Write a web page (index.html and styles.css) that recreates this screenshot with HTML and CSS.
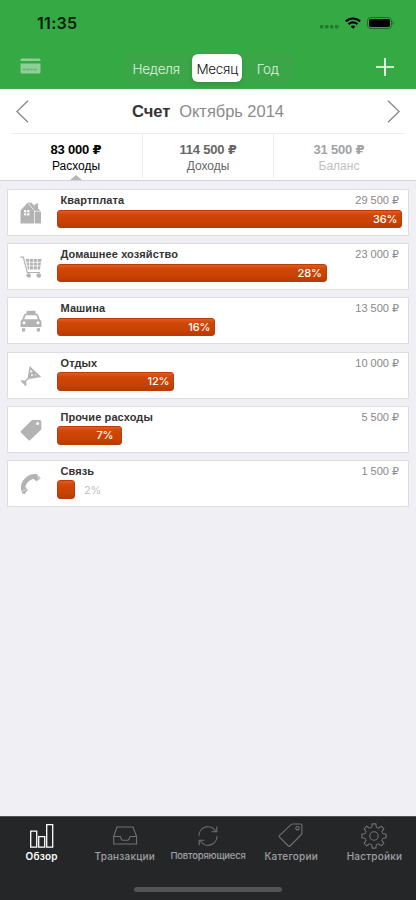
FILE: index.html
```html
<!DOCTYPE html>
<html lang="ru">
<head>
<meta charset="utf-8">
<meta name="viewport" content="width=device-width">
<title>Обзор</title>
<link rel="stylesheet" href="styles.css">
</head>
<body>
<div class="app">
  <header class="top">
    <div class="status">
      <span class="time">11:35</span>
      <div class="status-icons">
        <svg width="20" height="4" viewBox="0 0 20 4" fill="#1f7a2b"><rect x="1" width="3.4" height="3.4" rx="1"/><rect x="6" width="3.4" height="3.4" rx="1"/><rect x="11" width="3.4" height="3.4" rx="1"/><rect x="16" width="3.4" height="3.4" rx="1"/></svg>
        <svg class="wifi" width="16" height="12" viewBox="0 0 16 12" fill="none" stroke="#000" stroke-width="2.2"><path d="M.9 4.4a10.2 10.2 0 0 1 14.2 0M3.6 7.2a6.4 6.4 0 0 1 8.8 0"/><path d="M8 11.8 5.7 9.5a3.3 3.3 0 0 1 4.6 0z" fill="#000" stroke="none"/></svg>
        <svg width="27" height="12" viewBox="0 0 27 12"><rect x=".5" y=".5" width="24" height="11" rx="3.2" fill="none" stroke="#1d6b28"/><rect x="2" y="2" width="21" height="8" rx="1.8"/><path d="M25.6 4v4q1.2-.6 1.2-2t-1.2-2z" fill="#1d6b28"/></svg>
      </div>
    </div>
    <nav class="nav">
      <svg class="cardicon" width="21" height="16" viewBox="0 0 21 16" fill="#8fce96"><path d="M.5 3V2Q.5.5 2 .5h17q1.500 0 1.500 1.500v1zM.5 5.400h20V14q0 1.500-1.500 1.500H2Q.5 15.500.5 14z"/><path d="M2.500 11.500h14" stroke="#5db567" stroke-width="1.400" stroke-dasharray="3 .7" fill="none"/></svg>
      <div class="segments"><span class="seg week">Неделя</span><span class="seg active">Месяц</span><span class="seg year">Год</span></div>
      <svg class="plus" width="18" height="18" viewBox="0 0 18 18" stroke="#fff" stroke-width="1.700"><path d="M9 0v18M0 9h18"/></svg>
    </nav>
  </header>
  <section class="summary">
    <div class="period">
      <svg width="13" height="23" viewBox="0 0 13 23" fill="none" stroke="#888" stroke-width="1.300"><path d="M12 .7.9 11.500 12 22.300"/></svg>
      <h1><b>Счет</b><span>Октябрь 2014</span></h1>
      <svg width="13" height="23" viewBox="0 0 13 23" fill="none" stroke="#888" stroke-width="1.300"><path d="m1 .7 11.100 10.800L1 22.300"/></svg>
    </div>
    <div class="totals">
      <div class="total selected"><b>83 000 ₽</b><span>Расходы</span></div>
      <div class="total income"><b>114 500 ₽</b><span>Доходы</span></div>
      <div class="total balance"><b>31 500 ₽</b><span>Баланс</span></div>
    </div>
  </section>
  <main class="list">
    <article class="row">
      <svg class="icon" viewBox="0 0 22 22" fill="#b3b3b3"><path d="M.5 8.500 7.500.8H11.500L14.500 4V2.800L18 1v5.600L21 9.500V21.500H.5z"/><path d="m8.200 1.500 6.300 7.300V21.500M14.500 9.300H21" fill="none" stroke="#fff" stroke-width=".7"/><path d="M4 8h5.400v5.400H4z" fill="#fff"/><path d="M6.700 8v5.400M4 10.700h5.400" stroke="#b3b3b3"/></svg>
      <div class="info"><div class="caption"><b>Квартплата</b><span>29 500 ₽</span></div><div class="track"><div class="bar" style="width:345px">36%</div></div></div>
    </article>
    <article class="row">
      <svg class="icon" viewBox="0 0 22 22" fill="none" stroke="#b3b3b3"><path d="M.3 1.200h3L7.300 16.500H20" stroke-width="1.200"/><path d="M5.700 3H21.500L20 13.500H8z" fill="#b3b3b3" stroke="none"/><path d="M6 6.300h16M7 9.800h14M9.500 2.500v11.500M13.400 2.500v11.500M17.300 2.500v11.500" stroke="#fff" stroke-width=".8"/><circle cx="8.700" cy="19.500" r="2.300" fill="#b3b3b3" stroke="none"/><circle cx="18.800" cy="19.500" r="2.300" fill="#b3b3b3" stroke="none"/></svg>
      <div class="info"><div class="caption"><b>Домашнее хозяйство</b><span>23 000 ₽</span></div><div class="track"><div class="bar" style="width:269.500px">28%</div></div></div>
    </article>
    <article class="row">
      <svg class="icon" viewBox="0 0 22 22" fill="#b3b3b3"><path d="M6.500 3.500V1.800Q6.500.7 7.600.7h6.800q1.100 0 1.100 1.100v1.700q2.200.2 2.900 2L19.500 9Q21.500 10 21.500 12.500V17H.5v-4.500Q.5 10 2.500 9l1.100-3.500q.7-1.800 2.900-2z"/><path d="M6.400 5.200h9.200q.8 0 1.100.8l1 3.200H4.300l1-3.200q.3-.8 1.100-.8z" fill="#fff"/><circle cx="4" cy="12.700" r="1.500" fill="#fff"/><circle cx="18" cy="12.700" r="1.500" fill="#fff"/><path d="M2 18.200h3.200v2q0 1.600-1.600 1.600T2 20.200zM16.800 18.200H20v2q0 1.600-1.600 1.600t-1.600-1.600z"/></svg>
      <div class="info"><div class="caption"><b>Машина</b><span>13 500 ₽</span></div><div class="track"><div class="bar" style="width:158px">16%</div></div></div>
    </article>
    <article class="row">
      <svg class="icon" viewBox="0 0 22 22"><path d="m9.600 1 11.700 11-13.800 2.200z" fill="#b3b3b3"/><path d="M8.600 13 4.200 17.200" stroke="#b3b3b3" stroke-width="1.500"/><path d="m.6 15.700 1.100-.6 4.500 1.200.2 4-1 .7z" fill="#b3b3b3"/><path d="m10.500 4.500 2.300 2.300-2.700 1z" fill="#fff"/><circle cx="12" cy="10" r=".9" fill="#fff"/><circle cx="15.300" cy="9.900" r=".6" fill="#fff"/></svg>
      <div class="info"><div class="caption"><b>Отдых</b><span>10 000 ₽</span></div><div class="track"><div class="bar" style="width:117px">12%</div></div></div>
    </article>
    <article class="row">
      <svg class="icon" viewBox="0 0 22 22"><path d="M12 1h7.500q1.800 0 1.800 1.800v7.700L10 21.200q-.8.700-1.600-.1L.9 13.500q-.8-.8 0-1.600z" fill="#b3b3b3"/><circle cx="17.600" cy="4.600" r="1.500" fill="#fff"/></svg>
      <div class="info"><div class="caption"><b>Прочие расходы</b><span>5 500 ₽</span></div><div class="track"><div class="bar short" style="width:64.500px">7%</div></div></div>
    </article>
    <article class="row">
      <svg class="icon" viewBox="0 0 22 22" fill="#b3b3b3"><path d="M1.600 18.500C-1.500 9.500 6.500-.2 17 1L20.800 5.200 16.600 8.300 13.600 6C9.600 6.600 6 10.300 5.400 14L7.900 16.800 4.500 21.200 2.400 20.600z"/><path d="m17.200 1.600 2.200 5M1.600 18.600l5.500-2.800" stroke="#fff" stroke-width=".6"/></svg>
      <div class="info"><div class="caption"><b>Связь</b><span>1 500 ₽</span></div><div class="track"><div class="bar" style="width:17.500px"></div><span class="outside">2%</span></div></div>
    </article>
  </main>
  <footer class="tabs">
    <div class="tabrow">
      <div class="tab current"><svg width="26" height="26" viewBox="0 0 26 26" fill="none" stroke="currentColor" stroke-width="1.300"><path d="M1.700 8.200h6v16h-6zM9.700 13.700h6v10.500h-6zM17.700 1.700h6v22.500h-6z"/></svg><span class="t1">Обзор</span></div>
      <div class="tab"><svg width="26" height="26" viewBox="0 0 26 26" fill="none" stroke="currentColor" stroke-width="1.100"><path d="M1.700 13.500 5 4h16l3.600 9.500V21H1.700zM1.700 13.500h6.500l1.400 3q.4.700 1 .7h5.200q.7 0 1-.7l1.400-3h6.400"/></svg><span class="t2">Транзакции</span></div>
      <div class="tab"><svg width="26" height="26" viewBox="0 0 26 26" fill="none" stroke="currentColor" stroke-width="1.100"><path d="M4 12.800A8.900 8.900 0 0 1 20.500 8M21.800 3.500v5.200h-5.300M22 13A8.900 8.900 0 0 1 5.500 18M4.200 22.200V17.300h5.300"/></svg><span class="t3">Повторяющиеся</span></div>
      <div class="tab"><svg width="26" height="26" viewBox="0 0 26 26" fill="none" stroke="currentColor" stroke-width="1.100"><path d="M14.500 1h8.200q1.200 0 1.200 1.200V10.300q0 .7-.5 1.200L12 23q-.8.800-1.600 0L1.500 14.200q-.8-.8 0-1.600L13 1.600q.6-.6 1.500-.6z"/><circle cx="19.500" cy="5.200" r="1.700"/></svg><span class="t4">Категории</span></div>
      <div class="tab"><svg width="26" height="26" viewBox="-13 -13 26 26" fill="none" stroke="currentColor" stroke-width="1.100"><defs><path id="tooth" d="M-3.440-8.310Q-2.300-8.600-2.200-9.500L-1.800-12.100H1.800L2.200-9.500Q2.300-8.600 3.440-8.310"/></defs><use href="#tooth"/><use href="#tooth" transform="rotate(45)"/><use href="#tooth" transform="rotate(90)"/><use href="#tooth" transform="rotate(135)"/><use href="#tooth" transform="rotate(180)"/><use href="#tooth" transform="rotate(225)"/><use href="#tooth" transform="rotate(270)"/><use href="#tooth" transform="rotate(315)"/><circle r="4.200"/></svg><span class="t5">Настройки</span></div>
    </div>
    <div class="home"></div>
  </footer>
</div>
</body>
</html>
```
FILE: styles.css
```css
* { box-sizing: border-box; }
body { margin: 0; font-family: "Liberation Sans", "DejaVu Sans", sans-serif; }
svg { display: block; flex: none; }
.app { width: 416px; height: 900px; display: flex; flex-direction: column; background: #efeff4; overflow: hidden; }
.top { height: 89px; background: #34a944; display: flex; flex-direction: column; border-bottom: 1px solid #41a74e; }
.status { height: 46px; display: flex; justify-content: space-between; align-items: center; padding: 0 22px 0 37px; }
.time { font: 600 16px/20px Inter, sans-serif; color: #051a08; letter-spacing: .3px; }
.status-icons { display: flex; align-items: center; gap: 6px; }
.status-icons svg:first-child { margin-top: 8px; }
.nav { height: 43px; display: flex; align-items: center; padding: 0 22px 0 20px; }
.cardicon { margin-top: -2px; }
.segments { margin-left: 84px; margin-top: 2px; width: 168px; height: 32px; display: flex; align-items: center; border-radius: 8px; background: #3aa648; }
.seg { height: 28px; text-align: center; font: 300 13.500px/31px Inter, sans-serif; letter-spacing: -0.3px; color: #e1f3e3; }
.week { width: 64px; }
.year { width: 52px; }
.active { width: 52px; border-radius: 6px; background: #fff; color: #111; margin-left: 4.500px; box-shadow: 0 2px 4px rgba(0, 0, 0, .15); }
.plus { margin-left: auto; margin-top: 1px; }
.summary { height: 92px; background: #fff; border-bottom: 1px solid #d4d4d8; padding: 0 12px; }
.period { height: 44px; display: flex; align-items: center; justify-content: space-between; padding: 0 4px; }
h1 { margin: 0; font-size: 16.500px; line-height: 22px; font-weight: 400; display: flex; gap: 9px; color: #8b8b8b; letter-spacing: -0.05px; }
h1 b { color: #333; }
.totals { height: 47px; border-top: 1px solid #ececec; display: grid; grid-template-columns: 130px 131px 131px; }
.total { position: relative; height: 44px; display: flex; flex-direction: column; align-items: center; padding-top: 7px; }
.total + .total { border-left: 1px solid #ececec; }
.total b { font-size: 13px; line-height: 17px; letter-spacing: -0.2px; }
.total span { font-size: 12px; line-height: 17px; }
.selected { color: #000; padding-right: 2px; }
.selected::after { content: ""; position: absolute; bottom: -2px; border: 6px solid transparent; border-top: 0; border-bottom: 5px solid #b6b6b9; }
.income { color: #666; }
.balance { color: #a2a2a2; }
.balance span { color: #c0c0c0; }
.list { flex: 1; padding: 8px 7px; display: flex; flex-direction: column; gap: 7.200px; }
.row { height: 47px; flex: none; display: flex; background: #fff; border: 1px solid #dedee2; padding-left: 12px; }
.icon { width: 22px; height: 22px; margin-top: 12px; }
.info { flex: 1; padding: 2px 5px 0 15.400px; }
.caption { height: 17.500px; display: flex; justify-content: space-between; padding: 0 4px 0 3.100px; line-height: 17px; font-size: 11px; }
.caption b { color: #333; letter-spacing: .1px; }
.caption span { color: #888; }
.track { display: flex; align-items: center; }
.bar { height: 18.500px; border-radius: 3px; border: 1px solid #bd3b06; background: linear-gradient(#df5c20, #d04708 24%, #c84202 70%, #b73a02); color: #fff; text-align: right; font: 500 11px/17px Inter, sans-serif; letter-spacing: -0.1px; padding-right: 4px; }
.bar:empty { padding: 0; }
.bar.short { padding-right: 7.500px; }
.outside { margin-left: 9px; color: #c2c2c2; font: 400 11px/18px Inter, sans-serif; }
.tabs { height: 84px; background: #252628; border-top: 1px solid #515154; }
.tabrow { display: flex; height: 70px; }
.tab { flex: 1; display: flex; flex-direction: column; align-items: center; color: #707173; padding-top: 6px; }
.tab span { font: 500 10px/14px Inter, sans-serif; letter-spacing: .2px; color: #a0a0a3; white-space: nowrap; }
.tab span.t3 { font-size: 9.500px; letter-spacing: -0.2px; }
.current, .tab.current span { color: #fff; }
.tab.current span { font-weight: 600; }
.home { width: 148px; height: 5px; margin: 0 auto; border-radius: 3px; background: #545455; }
```
